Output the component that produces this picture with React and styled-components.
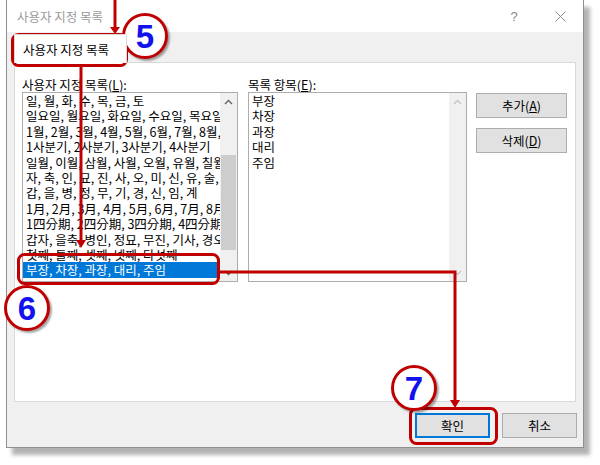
import React from 'react';
import styled, { createGlobalStyle } from 'styled-components';

const RED = '#c00000';
const UI_FONT = `"Noto Sans CJK KR", "Noto Sans", sans-serif`;
const UI_SIZE = '12.5px';

const GlobalStyle = createGlobalStyle`
  html, body {
    margin: 0;
    padding: 0;
    background: #fff;
  }
  body {
    font-family: ${UI_FONT};
  }
`;

const Stage = styled.div`
  position: relative;
  width: 600px;
  height: 465px;
  overflow: hidden;
  background: #fff;
`;

const Window = styled.div`
  box-sizing: border-box;
  width: 578px;
  height: 448px;
  margin-left: 6px;
  display: flex;
  flex-direction: column;
  background: #f0f0f0;
  border: 1px solid #8f8f8f;
  border-top: none;
  box-shadow: 6px 7px 4px rgba(0, 0, 0, 0.3);
`;

const TitleBar = styled.div`
  flex: none;
  height: 32px;
  display: flex;
  align-items: center;
  padding-left: 10px;
  background: #fff;
  color: #9a9a9a;
  font-size: ${UI_SIZE};
`;

const Title = styled.span`
  flex: 1;
`;

const TitleButton = styled.span`
  width: 46px;
  height: 32px;
  display: flex;
  align-items: center;
  justify-content: center;
  color: #8a8a8a;
  font-family: "Liberation Sans", sans-serif;
  font-size: 13px;
`;

const TabStrip = styled.div`
  flex: none;
  height: 30px;
  display: flex;
  align-items: flex-end;
  padding-left: 7px;
`;

const Tab = styled.div`
  position: relative;
  z-index: 1;
  box-sizing: border-box;
  width: 113px;
  height: 29px;
  margin-bottom: -1px;
  padding: 0 8px;
  display: flex;
  align-items: center;
  background: #fff;
  border: 1px solid #d9d9d9;
  border-bottom: none;
  font-size: ${UI_SIZE};
  color: #000;
  white-space: nowrap;
`;

const Panel = styled.div`
  flex: none;
  box-sizing: border-box;
  height: 340px;
  margin: 0 7px;
  padding: 14px 0 0 7px;
  display: flex;
  gap: 10px;
  background: #fff;
  border: 1px solid #d9d9d9;
`;

const Column = styled.div`
  width: ${p => p.$w}px;
  display: flex;
  flex-direction: column;
`;

const Label = styled.div`
  height: 15px;
  line-height: 15px;
  font-size: ${UI_SIZE};
  color: #000;
  white-space: nowrap;
`;

const ListBox = styled.div`
  box-sizing: border-box;
  height: 190px;
  display: flex;
  background: #fff;
  border: 1px solid #adadad;
`;

const Items = styled.div`
  flex: 1;
  min-width: 0;
  overflow: hidden;
  padding-right: 3px;
`;

const Item = styled.div`
  height: 15.4px;
  line-height: 15.4px;
  padding-left: 3px;
  font-size: ${UI_SIZE};
  white-space: nowrap;
  color: ${p => (p.$selected ? '#fff' : '#000')};
  background: ${p => (p.$selected ? '#0078d7' : 'transparent')};
`;

const ScrollBar = styled.div`
  flex: none;
  width: 17px;
  display: flex;
  flex-direction: column;
  background: #f0f0f0;
`;

const ScrollArrow = styled.div`
  flex: none;
  height: 17px;
  display: flex;
  align-items: center;
  justify-content: center;
  color: ${p => (p.$disabled ? '#c4c4c4' : '#606060')};
`;

const Track = styled.div`
  flex: 1;
`;

const Thumb = styled.div`
  margin: ${p => p.$top}px 1px 0;
  height: ${p => p.$height}px;
  background: #cdcdcd;
`;

const ButtonColumn = styled.div`
  width: 91px;
  padding-top: 16px;
  margin-left: -1px;
  display: flex;
  flex-direction: column;
  gap: 10px;
`;

const Button = styled.div`
  box-sizing: border-box;
  width: ${p => p.$w}px;
  height: 25px;
  display: flex;
  align-items: center;
  justify-content: center;
  background: #e1e1e1;
  border: 1px solid ${p => (p.$default ? '#0078d7' : '#adadad')};
  box-shadow: ${p => (p.$default ? 'inset 0 0 0 1px #0078d7' : 'none')};
  font-size: ${UI_SIZE};
  color: #000;
`;

const Footer = styled.div`
  flex: 1;
  display: flex;
  justify-content: flex-end;
  align-items: flex-start;
  gap: 12px;
  padding: 11px 6px 0 0;
`;

const Overlay = styled.svg`
  position: absolute;
  left: 0;
  top: 0;
  width: 600px;
  height: 465px;
  pointer-events: none;
`;

const Badge = styled.div`
  position: absolute;
  left: ${p => p.$x - 23}px;
  top: ${p => p.$y - 23}px;
  box-sizing: border-box;
  width: 46px;
  height: 46px;
  display: flex;
  align-items: center;
  justify-content: center;
  border: 3px solid ${RED};
  border-radius: 50%;
  background: #fff;
  box-shadow: 2px 2px 2px rgba(0, 0, 0, 0.35);
  color: #1212ee;
  font-family: "Liberation Sans", Arial, sans-serif;
  font-weight: bold;
  font-size: 33px;
  line-height: 1;
`;

const Chevron = ({ down }) => (
  <svg width="9" height="6" viewBox="0 0 9 6">
    <polyline
      points={down ? '1,1 4.5,4.5 8,1' : '1,5 4.5,1.5 8,5'}
      fill="none"
      stroke="currentColor"
      strokeWidth="1.3"
    />
  </svg>
);

const CloseIcon = () => (
  <svg width="11" height="11" viewBox="0 0 11 11">
    <path d="M0.5 0.5 L10.5 10.5 M10.5 0.5 L0.5 10.5" stroke="currentColor" strokeWidth="1" />
  </svg>
);

const customLists = [
  '일, 월, 화, 수, 목, 금, 토',
  '일요일, 월요일, 화요일, 수요일, 목요일, 금요일, 토요일',
  '1월, 2월, 3월, 4월, 5월, 6월, 7월, 8월, 9월, 10월, 11월, 12월',
  '1사분기, 2사분기, 3사분기, 4사분기',
  '일월, 이월, 삼월, 사월, 오월, 유월, 칠월, 팔월, 구월, 시월, 십일월, 십이월',
  '자, 축, 인, 묘, 진, 사, 오, 미, 신, 유, 술, 해',
  '갑, 을, 병, 정, 무, 기, 경, 신, 임, 계',
  '1月, 2月, 3月, 4月, 5月, 6月, 7月, 8月, 9月, 10月, 11月, 12月',
  '1四分期, 2四分期, 3四分期, 4四分期',
  '갑자, 을축, 병인, 정묘, 무진, 기사, 경오, 신미, 임신, 계유',
  '첫째, 둘째, 셋째, 넷째, 다섯째',
  '부장, 차장, 과장, 대리, 주임',
];

const entries = ['부장', '차장', '과장', '대리', '주임'];

const App = () => {
  const selected = customLists.length - 1;

  return (
    <Stage>
      <GlobalStyle />
      <Window>
        <TitleBar>
          <Title>사용자 지정 목록</Title>
          <TitleButton>?</TitleButton>
          <TitleButton><CloseIcon /></TitleButton>
        </TitleBar>
        <TabStrip>
          <Tab>사용자 지정 목록</Tab>
        </TabStrip>
        <Panel>
          <Column $w={216}>
            <Label>사용자 지정 목록(<u>L</u>):</Label>
            <ListBox>
              <Items>
                {customLists.map((text, i) => (
                  <Item key={i} $selected={i === selected}>{text}</Item>
                ))}
              </Items>
              <ScrollBar>
                <ScrollArrow><Chevron /></ScrollArrow>
                <Track><Thumb $top={45} $height={95} /></Track>
                <ScrollArrow><Chevron down /></ScrollArrow>
              </ScrollBar>
            </ListBox>
          </Column>
          <Column $w={219}>
            <Label>목록 항목(<u>E</u>):</Label>
            <ListBox>
              <Items>
                {entries.map(text => (
                  <Item key={text}>{text}</Item>
                ))}
              </Items>
              <ScrollBar>
                <ScrollArrow $disabled><Chevron /></ScrollArrow>
                <Track />
                <ScrollArrow $disabled><Chevron down /></ScrollArrow>
              </ScrollBar>
            </ListBox>
          </Column>
          <ButtonColumn>
            <Button $w={91}>추가(<u>A</u>)</Button>
            <Button $w={91}>삭제(<u>D</u>)</Button>
          </ButtonColumn>
        </Panel>
        <Footer>
          <Button $w={75} $default>확인</Button>
          <Button $w={75}>취소</Button>
        </Footer>
      </Window>

      <Overlay viewBox="0 0 600 465">
        <g fill="none" stroke={RED} strokeWidth="3">
          <line x1="115" y1="0" x2="115" y2="28" />
          <rect x="12.5" y="34.5" width="114" height="31" rx="6" />
          <line x1="81" y1="66" x2="81" y2="241" />
          <rect x="18.5" y="254.5" width="200" height="29" rx="6" />
          <polyline points="220,272 455,272 455,401" />
          <rect x="410.5" y="408.5" width="86" height="35" rx="6" />
        </g>
        <g fill={RED}>
          <polygon points="110,27 120,27 115,34" />
          <polygon points="76,240 86,240 81,248" />
          <polygon points="450,400 460,400 455,408" />
        </g>
      </Overlay>
      <Badge $x={145} $y={36}>5</Badge>
      <Badge $x={27} $y={308}>6</Badge>
      <Badge $x={414} $y={388}>7</Badge>
    </Stage>
  );
};

export default App;
